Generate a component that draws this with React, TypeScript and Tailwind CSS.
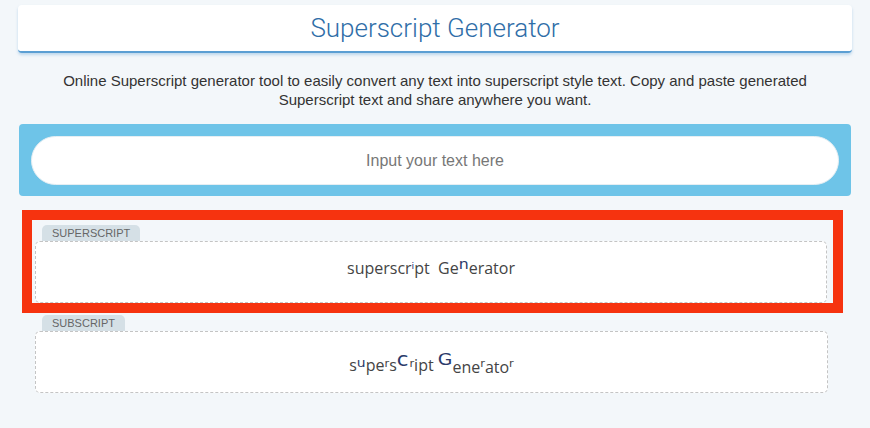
import React from "react";

function Tag({ label }: { label: string }) {
  return (
    <div className="h-[16px] w-fit rounded-t-[5px] bg-[#d5e0e6] px-[10px] pt-[1px] text-[11px] leading-[15px] text-[#666]">
      {label}
    </div>
  );
}

export default function App() {
  const mod = "font-['DejaVu_Sans',sans-serif] leading-none";
  return (
    <div className="min-h-[428px] w-[870px] bg-[#f3f7fa] pt-[5px] font-['Liberation_Sans',Arial,sans-serif]">
      <div className="mx-[18px] flex h-[48px] items-center justify-center rounded-[4px] border-b-2 border-[#5b9fd3] bg-white shadow-[0_2px_3px_rgba(91,159,211,0.35)]">
        <h1 className="font-['Roboto',sans-serif] text-[26px] font-light leading-none text-[#2f6ea8]">
          Superscript Generator
        </h1>
      </div>
      <p className="mx-auto mt-[18px] w-[770px] text-center text-[15px] leading-[19px] text-[#333]">
        Online Superscript generator tool to easily convert any text into superscript style text. Copy and paste generated Superscript text and share anywhere you want.
      </p>
      <div className="mx-[19px] mt-[15px] h-[72px] rounded-[4px] bg-[#6ec4e8] p-[12px]">
        <div className="flex h-[49px] items-center justify-center rounded-full border border-[#e5eef3] bg-white text-[16px] text-[#777]">
          Input your text here
        </div>
      </div>
      <div className="ml-[22px] mt-[14px] w-[821px] border-[10px] border-[#f6330f] pt-[5px]">
        <div className="ml-[10px]">
          <Tag label="SUPERSCRIPT" />
        </div>
        <div className="ml-[3px] mr-[6px] h-[62px] whitespace-pre rounded-[5px] border border-dashed border-[#c4c4c4] bg-white text-center font-['Open_Sans','DejaVu_Sans',sans-serif] text-[16px] leading-[52px] text-[#444]">
          superscr<span className={`${mod} text-[15px] text-[#2b3a7a]`}>ⁱ</span>pt  Ge<span className={`${mod} align-[-3px] text-[25px] text-[#2b3a6b]`}>ⁿ</span>erator
        </div>
      </div>
      <div className="ml-[42px] mt-[2px]">
        <Tag label="SUBSCRIPT" />
      </div>
      <div className="ml-[35px] h-[62px] w-[793px] whitespace-pre rounded-[5px] border border-dashed border-[#c4c4c4] bg-white pt-[4px] text-center font-['Open_Sans','DejaVu_Sans',sans-serif] text-[16px] leading-[58px] text-[#444]">
        s<span className={`${mod} align-[-2.5px] text-[22px] text-[#2b3a6b]`}>ᵘ</span>pe<span className={`${mod} align-[-1.5px] text-[18px]`}>ʳ</span>s<span className={`${mod} align-[-5.5px] text-[34px] text-[#2b3a6b]`}>ᶜ</span><span className={`${mod} align-[-1.5px] text-[18px]`}>ʳ</span>ipt <span className={`${mod} align-[-4px] text-[30px] text-[#2b3a6b]`}>ᴳ</span><span className="align-[-2px]">ene</span><span className={`${mod} align-[-1.5px] text-[18px]`}>ʳ</span><span className="align-[-2px]">ato</span><span className={`${mod} align-[-1.5px] text-[18px]`}>ʳ</span>
      </div>
    </div>
  );
}
